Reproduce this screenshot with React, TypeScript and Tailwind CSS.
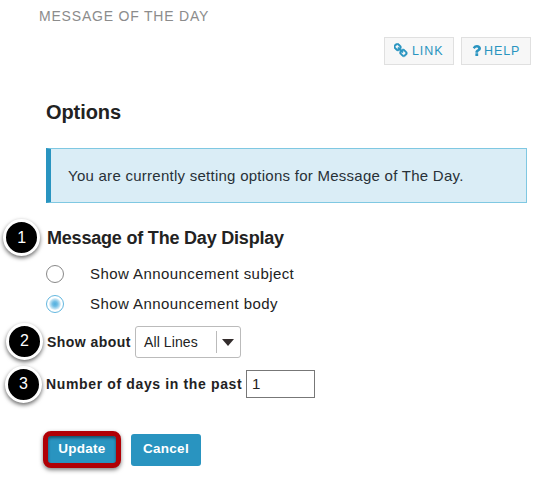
import type { ReactNode } from 'react';

function Badge({ n, className }: { n: number; className: string }) {
  return (
    <span
      className={`flex size-[37px] shrink-0 items-center justify-center rounded-full border-[3px] border-white bg-black text-base leading-none text-white shadow-[0_2px_4px_0px_rgba(0,0,0,0.6)] ${className}`}
    >
      {n}
    </span>
  );
}

function ToolButton({ icon, children }: { icon: ReactNode; children: string }) {
  return (
    <button className="flex h-7 w-[70px] items-center border border-[#e0e0e0] bg-[#f7f7f7] pl-[9px] text-[12.5px] tracking-[0.9px] whitespace-nowrap text-[#2994c0]">
      {icon}
      <span className="mt-px">{children}</span>
    </button>
  );
}

function LinkIcon() {
  return (
    <svg viewBox="64 0 1664 1792" className="mr-[4px] -mt-[2px] h-[15px] w-[14px] shrink-0" fill="currentColor" stroke="currentColor" strokeWidth="60">
      <path d="M1456 1216q0-40-28-68l-208-208q-28-28-68-28-42 0-72 32 3 3 19 18.5t21.5 21.5 15 19 13 25.5 3.5 27.5q0 40-28 68t-68 28q-15 0-27.5-3.5t-25.5-13-19-15-21.5-21.5-18.5-19q-33 31-33 73 0 40 28 68l206 207q27 27 68 27 40 0 68-26l147-146q28-28 28-67zm-703-705q0-40-28-68l-206-207q-28-28-68-28-39 0-68 27l-147 146q-28 28-28 67 0 40 28 68l208 208q27 27 68 27 42 0 72-31-3-3-19-18.5t-21.5-21.5-15-19-13-25.5-3.5-27.5q0-40 28-68t68-28q15 0 27.5 3.5t25.5 13 19 15 21.5 21.5 18.5 19q33-31 33-73zm895 705q0 120-85 203l-147 146q-83 83-203 83-121 0-204-85l-206-207q-83-83-83-203 0-123 88-209l-88-88q-86 88-208 88-120 0-204-84l-208-208q-84-84-84-204t85-203l147-146q83-83 203-83 121 0 204 85l206 207q83 83 83 203 0 123-88 209l88 88q86-88 208-88 120 0 204 84l208 208q84 84 84 204z" />
    </svg>
  );
}

function HelpIcon() {
  return (
    <svg viewBox="384 256 1024 1280" preserveAspectRatio="none" className="mr-[3px] ml-px -mt-px h-[11px] w-[9px] shrink-0" fill="currentColor">
      <path d="M1088 1256v240q0 16-12 28t-28 12h-240q-16 0-28-12t-12-28v-240q0-16 12-28t28-12h240q16 0 28 12t12 28zm316-600q0 54-15.5 101t-35 76.5-55 59.5-57.5 43.5-61 35.5q-41 23-68.5 65t-27.5 67q0 17-12 32.5t-28 15.5h-240q-15 0-25.5-18.5t-10.5-37.5v-45q0-83 65-156.5t143-108.5q59-27 84-56t25-76q0-42-46.5-74t-107.5-32q-65 0-108 29-35 25-107 115-13 16-31 16-12 0-25-8l-164-125q-13-10-15.5-25t5.5-28q160-266 464-266 80 0 161 31t146 83 106 127.5 41 158.5z" />
    </svg>
  );
}

function Radio({ label, checked = false }: { label: string; checked?: boolean }) {
  return (
    <label className="ml-[46px] flex h-[30px] items-center">
      <span
        className={`flex size-[18px] items-center justify-center rounded-full border ${checked ? 'border-[#63b7df]' : 'border-[#888]'}`}
      >
        {checked && (
          <span className="size-[12px] rounded-full bg-[radial-gradient(circle_closest-side,#52b0df_0%,#70bde4_40%,#a9d7ee_70%,#e5f3fa_100%)]" />
        )}
      </span>
      <span className="ml-[26px] text-[15px] tracking-[0.43px]">{label}</span>
    </label>
  );
}

export default function App() {
  return (
    <main className="h-[481px] w-[557px] overflow-hidden bg-white font-['Liberation_Sans',Arial,sans-serif] whitespace-nowrap text-[#222]">
      <header className="flex h-[37px] items-start pt-[6px] pl-[39px] text-sm tracking-[0.8px] text-[#8c8c8c]">
        MESSAGE OF THE DAY
      </header>
      <div className="flex gap-[7px] pl-[384px]">
        <ToolButton icon={<LinkIcon />}>LINK</ToolButton>
        <ToolButton icon={<HelpIcon />}>HELP</ToolButton>
      </div>
      <h1 className="mt-[32px] ml-[46px] text-[20px] leading-[30px] font-bold tracking-[-0.08px]">Options</h1>
      <div className="mt-[21px] ml-[46px] flex h-[55px] w-[481px] items-center border border-l-[5px] border-[#7fc8e2] border-l-[#2994c0] bg-[#daedf6] pt-px pl-[17px] text-[15px] tracking-[0.26px] text-[#283138]">
        You are currently setting options for Message of The Day.
      </div>
      <h2 className="mt-[16px] flex h-[37px] items-center pl-[3px] text-[18px] font-bold tracking-[-0.2px]">
        <Badge n={1} className="mr-[7px] font-normal" />
        <span className="mt-px">Message of The Day Display</span>
      </h2>
      <div className="mt-[3px]">
        <Radio label="Show Announcement subject" />
        <Radio label="Show Announcement body" checked />
      </div>
      <div className="mt-[4px] flex h-[38px] items-center pl-[6px]">
        <Badge n={2} className="mr-[4px] mb-[2px]" />
        <span className="w-[88px] text-sm font-bold tracking-[0.45px]">Show about</span>
        <button className="flex h-[32px] w-[106px] items-center rounded-[3px] border border-[#bbb] pl-2 text-sm tracking-[0.1px]">
          <span className="w-[72px] text-left">All Lines</span>
          <span className="h-[22px] w-px bg-[#bbb]" />
          <svg viewBox="0 0 12 7" className="ml-[5px] h-[7px] w-[12px]" fill="#332c2c">
            <path d="M0 0h12L6 7z" />
          </svg>
        </button>
      </div>
      <div className="mt-[4px] flex h-[38px] items-center pl-[5px]">
        <Badge n={3} className="mr-[4px]" />
        <span className="w-[200px] text-sm font-bold tracking-[0.64px]">Number of days in the past</span>
        <input
          defaultValue="1"
          className="h-[28px] w-[69px] border border-[#777] bg-white px-[5px] pb-px text-[15px] outline-none"
        />
      </div>
      <div className="mt-[28px] flex items-center gap-[10px] pl-[43px] text-[13.5px] font-bold text-white">
        <button className="flex h-[37px] w-[78px] items-center justify-center rounded-[8px] border-[5px] border-[#b00005] bg-[#2994c0] tracking-[0.25px] shadow-[0_2px_4px_rgba(0,0,0,0.5),inset_0_2px_3px_rgba(0,0,0,0.45)]">
          Update
        </button>
        <button className="h-[32px] w-[70px] rounded-[3px] bg-[#2994c0] tracking-[0.25px]">Cancel</button>
      </div>
    </main>
  );
}
